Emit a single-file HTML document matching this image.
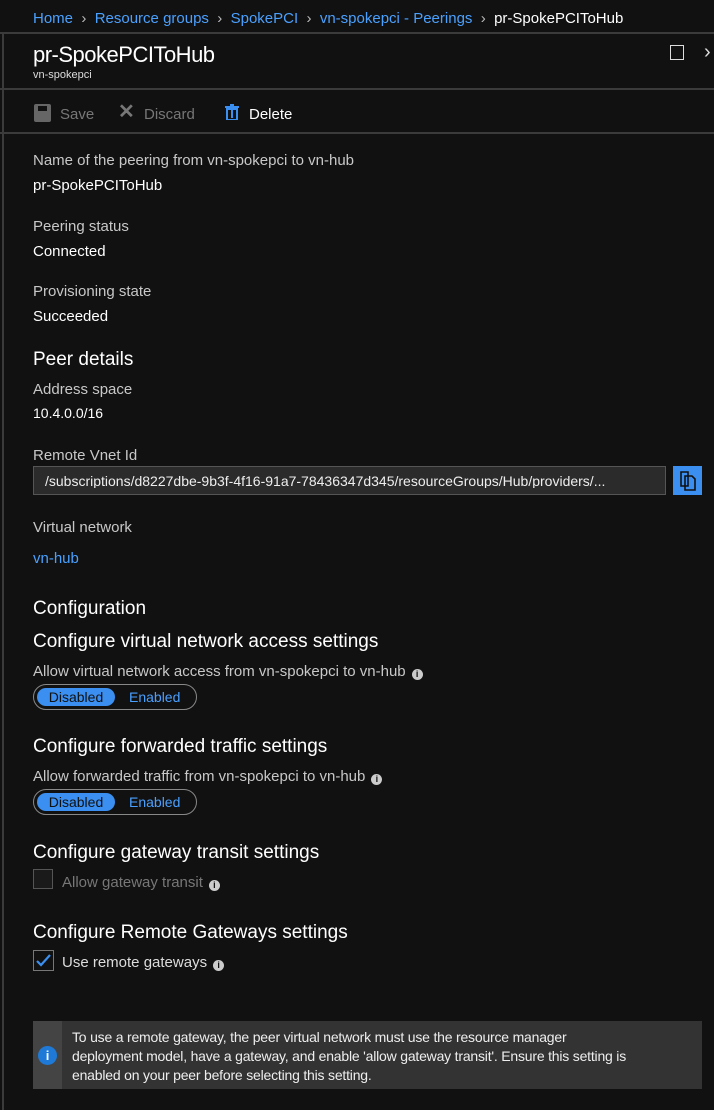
<!DOCTYPE html>
<html><head><style>
body{margin:0;width:714px;height:1110px;background:#111;overflow:hidden;font-family:"Liberation Sans",sans-serif;color:#fff;position:relative}
.a{position:absolute;white-space:nowrap;line-height:1}
.lab{color:#c8c8c8;font-size:15px}
.val{color:#fff;font-size:15px}
.h{color:#fff;font-size:19px}
.hr{position:absolute;left:0;width:714px;height:2px;background:#3b3b3b}
.tog{position:absolute;left:33px;width:162px;height:24px;border:1.5px solid #888;border-radius:14px}
.tog .on{position:absolute;left:3px;top:3px;width:78px;height:18px;background:#3a8ff0;border-radius:10px;color:#111;font-size:14px;text-align:center;line-height:18px}
.tog .off{position:absolute;left:95px;top:3px;color:#4aa0ff;font-size:14px;line-height:18px}
.i{display:inline-block;width:11px;height:11px;border-radius:50%;background:#ccc;color:#111;font-size:9px;font-weight:bold;text-align:center;line-height:11px;margin-left:6px;vertical-align:-1px}
</style></head><body>
<div style="position:absolute;left:2px;top:33px;width:2px;height:1077px;background:#3b3b3b"></div>
<div class="a" style="left:33px;top:11px;font-size:15px;color:#4aa0ff">Home <span style="color:#bbb">&nbsp;›&nbsp;</span> Resource groups <span style="color:#bbb">&nbsp;›&nbsp;</span> SpokePCI <span style="color:#bbb">&nbsp;›&nbsp;</span> vn-spokepci - Peerings <span style="color:#bbb">&nbsp;›&nbsp;</span> <span style="color:#fff">pr-SpokePCIToHub</span></div>
<div class="hr" style="top:32px"></div>
<div class="a" style="left:33px;top:44px;font-size:22px;letter-spacing:-0.5px">pr-SpokePCIToHub</div>
<div class="a" style="left:33px;top:70px;font-size:11px;color:#ddd">vn-spokepci</div>
<div style="position:absolute;left:670px;top:45px;width:12px;height:13px;border:1.5px solid #ddd"></div>
<div class="a" style="left:704px;top:42px;font-size:20px;color:#ddd">›</div>
<div class="hr" style="top:88px"></div>
<div style="position:absolute;left:34px;top:104px;width:17px;height:18px;background:#666;border-radius:2px"></div>
<div style="position:absolute;left:38px;top:106px;width:9px;height:5px;background:#111"></div>
<div class="a" style="left:60px;top:107px;font-size:15px;color:#777">Save</div>
<div class="a" style="left:118px;top:102px;font-size:20px;color:#777;font-weight:bold">✕</div>
<div class="a" style="left:144px;top:107px;font-size:15px;color:#777">Discard</div>
<svg class="a" style="left:225px;top:104px" width="14" height="16" viewBox="0 0 14 16"><rect x="0" y="2" width="14" height="2" fill="#3a8ff0"/><rect x="5" y="0" width="4" height="2" fill="#3a8ff0"/><rect x="2" y="5" width="10" height="11" fill="none" stroke="#3a8ff0" stroke-width="2"/><rect x="6" y="6" width="2" height="8" fill="#3a8ff0"/></svg>
<div class="a" style="left:249px;top:107px;font-size:15px">Delete</div>
<div class="hr" style="top:132px"></div>
<div class="a lab" style="left:33px;top:153px">Name of the peering from vn-spokepci to vn-hub</div>
<div class="a val" style="left:33px;top:178px">pr-SpokePCIToHub</div>
<div class="a lab" style="left:33px;top:219px">Peering status</div>
<div class="a val" style="left:33px;top:244px">Connected</div>
<div class="a lab" style="left:33px;top:284px">Provisioning state</div>
<div class="a val" style="left:33px;top:309px">Succeeded</div>
<div class="a h" style="left:33px;top:350px">Peer details</div>
<div class="a lab" style="left:33px;top:382px">Address space</div>
<div class="a val" style="left:33px;top:406px;font-size:14px">10.4.0.0/16</div>
<div class="a lab" style="left:33px;top:448px">Remote Vnet Id</div>
<div style="position:absolute;left:33px;top:466px;width:633px;height:29px;background:#2b2b2b;border:1px solid #555;box-sizing:border-box"></div>
<div class="a" style="left:45px;top:474px;font-size:14px;color:#eee;width:614px;overflow:hidden">/subscriptions/d8227dbe-9b3f-4f16-91a7-78436347d345/resourceGroups/Hub/providers/...</div>
<div style="position:absolute;left:673px;top:466px;width:29px;height:29px;background:#3a8ff0"></div>
<svg class="a" style="left:679px;top:471px" width="18" height="20" viewBox="0 0 18 20"><path d="M2 1h7v14H2z M6 5h7l3 3v11H6z" fill="none" stroke="#111" stroke-width="1.6"/></svg>
<div class="a lab" style="left:33px;top:520px">Virtual network</div>
<div class="a" style="left:33px;top:551px;font-size:15px;color:#4aa0ff">vn-hub</div>
<div class="a h" style="left:33px;top:599px">Configuration</div>
<div class="a h" style="left:33px;top:632px">Configure virtual network access settings</div>
<div class="a lab" style="left:33px;top:664px">Allow virtual network access from vn-spokepci to vn-hub<span class="i">i</span></div>
<div class="tog" style="top:684px"><div class="on">Disabled</div><div class="off">Enabled</div></div>
<div class="a h" style="left:33px;top:737px">Configure forwarded traffic settings</div>
<div class="a lab" style="left:33px;top:769px">Allow forwarded traffic from vn-spokepci to vn-hub<span class="i">i</span></div>
<div class="tog" style="top:789px"><div class="on">Disabled</div><div class="off">Enabled</div></div>
<div class="a h" style="left:33px;top:843px">Configure gateway transit settings</div>
<div style="position:absolute;left:33px;top:869px;width:20px;height:20px;border:1px solid #555;background:#1a1a1a;box-sizing:border-box"></div>
<div class="a lab" style="left:62px;top:875px;color:#777">Allow gateway transit<span class="i">i</span></div>
<div class="a h" style="left:33px;top:923px">Configure Remote Gateways settings</div>
<div style="position:absolute;left:33px;top:950px;width:21px;height:21px;border:1px solid #777;box-sizing:border-box"></div>
<svg class="a" style="left:36px;top:953px" width="15" height="15" viewBox="0 0 15 15"><path d="M1 8l4 4 9-10" fill="none" stroke="#3a8ff0" stroke-width="2.2"/></svg>
<div class="a lab" style="left:62px;top:955px;color:#ddd">Use remote gateways<span class="i">i</span></div>
<div style="position:absolute;left:33px;top:1021px;width:669px;height:68px;background:#333"></div>
<div style="position:absolute;left:33px;top:1021px;width:29px;height:68px;background:#444"></div>
<div style="position:absolute;left:38px;top:1046px;width:19px;height:19px;border-radius:50%;background:#1e7ad6;color:#fff;font-weight:bold;font-size:13px;text-align:center;line-height:19px">i</div>
<div style="position:absolute;left:72px;top:1028px;width:622px;font-size:14px;line-height:19px;color:#eee;letter-spacing:-0.2px">To use a remote gateway, the peer virtual network must use the resource manager<br>deployment model, have a gateway, and enable 'allow gateway transit'. Ensure this setting is<br>enabled on your peer before selecting this setting.</div>
</body></html>
